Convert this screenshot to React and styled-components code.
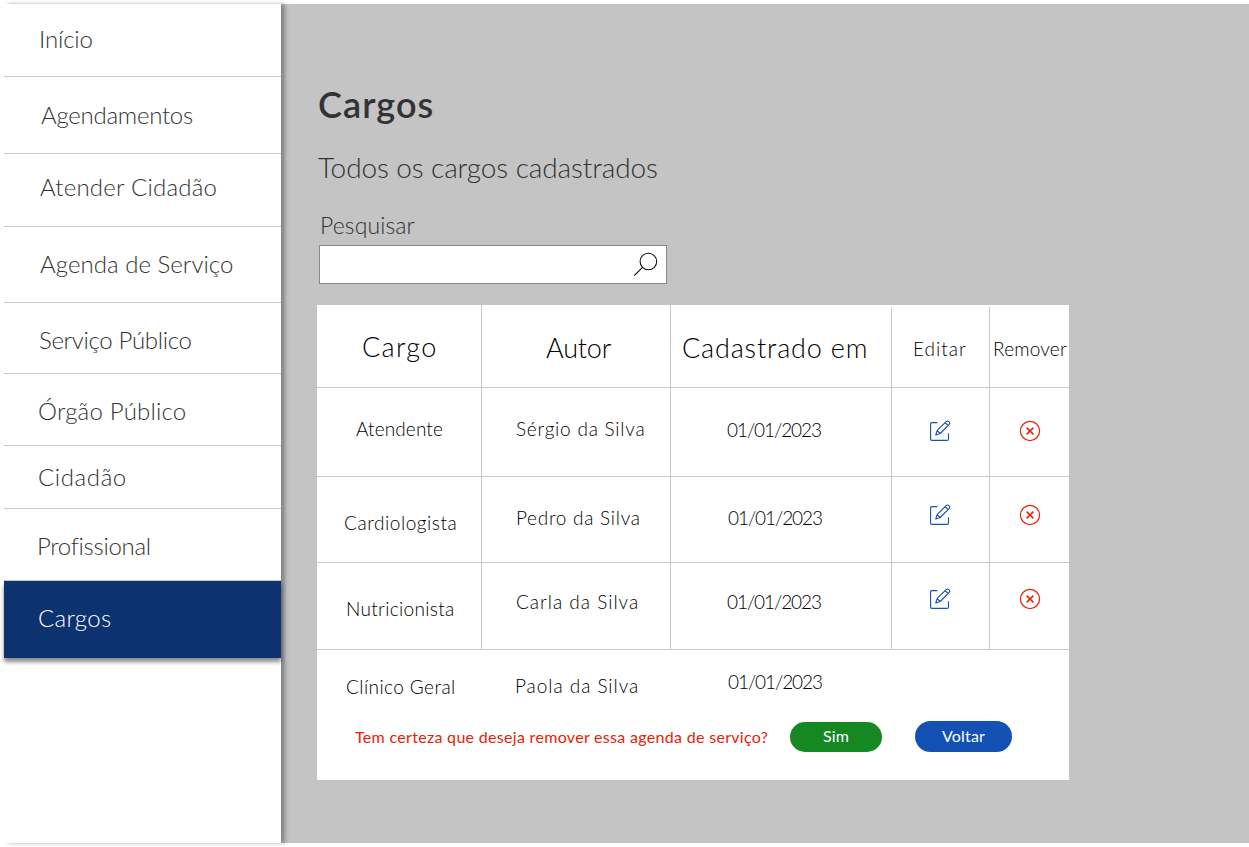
import React from "react";
import styled, { createGlobalStyle } from "styled-components";

const GlobalStyle = createGlobalStyle`
  * { box-sizing: border-box; }
  body { margin: 0; background: #fff; font-family: Lato, sans-serif; font-weight: 300; }
`;

const Page = styled.div`
  display: flex;
  width: 1249px;
  height: 847px;
  padding: 4px 0 4px 4px;
  overflow: hidden;
`;

const Sidebar = styled.nav`
  position: relative;
  z-index: 1;
  display: flex;
  flex-direction: column;
  flex: none;
  width: 277px;
  background: #fff;
  box-shadow: 4px 0 4px rgba(0, 0, 0, 0.32);
`;

const NavItem = styled.a`
  flex: none;
  height: ${(p) => p.$height}px;
  padding: ${(p) => p.$top}px 0 0 ${(p) => p.$left}px;
  border-bottom: 1px solid #c9c9c9;
  color: #333;
  font-size: 24px;
  line-height: 29px;
  letter-spacing: ${(p) => p.$track}px;
  white-space: nowrap;
`;

const ActiveItem = styled(NavItem)`
  border-bottom: 0;
  background: #0c326f;
  color: #fff;
  box-shadow: 0 4px 4px rgba(0, 0, 0, 0.45);
`;

const Main = styled.main`
  flex: 1;
  padding: 82px 0 0 36px;
  background: #c4c4c4;
  color: #333;
`;

const Title = styled.h1`
  height: 64px;
  margin: 0;
  padding-left: 1px;
  font-size: 36px;
  font-weight: 600;
  line-height: 36px;
  letter-spacing: 1.1px;
`;

const Subtitle = styled.h2`
  height: 61px;
  margin: 0;
  padding-left: 1px;
  font-size: 28px;
  font-weight: 300;
  line-height: 34px;
  letter-spacing: -0.11px;
`;

const SearchLabel = styled.label`
  display: block;
  height: 34px;
  padding-left: 3px;
  font-size: 23px;
  line-height: 28px;
  letter-spacing: 0.1px;
`;

const SearchBox = styled.div`
  display: flex;
  justify-content: flex-end;
  width: 348px;
  height: 39px;
  margin: 0 0 21px 2px;
  padding: 6px 8px 0 0;
  border: 1px solid #888;
  background: #fff;
`;

const Table = styled.section`
  width: 752px;
  height: 475px;
  background: #fff;
  color: #000;
`;

const Row = styled.div`
  display: grid;
  grid-template-columns: 165px 189px 221px 98px 79px;
  height: ${(p) => p.$height}px;
  border-bottom: ${(p) => (p.$open ? 0 : "1px solid #c9c9c9")};
`;

const Cell = styled.div`
  padding: ${(p) => p.$top}px 0 0 ${(p) => p.$left}px;
  border-right: ${(p) => (p.$open ? 0 : "1px solid #c9c9c9")};
  font-size: 19px;
  line-height: 23px;
  letter-spacing: ${(p) => p.$track || 0}px;
  white-space: nowrap;

  svg { display: block; }
`;

const HeadCell = styled(Cell)`
  margin-top: ${(p) => p.$inset || 0}px;
  font-size: 27px;
  line-height: 32px;
`;

const SmallHeadCell = styled(Cell)`
  margin-top: 2px;
`;

const Confirm = styled.div`
  display: flex;
  align-items: flex-end;
  height: 35px;
  padding-left: 38px;
`;

const Question = styled.p`
  flex: none;
  width: 435px;
  margin: 0 0 6px;
  color: #e52207;
  font-size: 16px;
  font-weight: 400;
  line-height: 19px;
  letter-spacing: 0.31px;
  white-space: nowrap;
`;

const Button = styled.button`
  width: ${(p) => p.$width}px;
  height: ${(p) => p.$height}px;
  margin: 0 33px 0 0;
  padding: 0 0 ${(p) => p.$lift}px;
  border: 0;
  border-radius: 16px;
  background: ${(p) => p.$color};
  color: #fff;
  font: 400 16px/19px Lato, sans-serif;
  letter-spacing: 0.2px;
`;

const SearchIcon = () => (
  <svg width="24" height="25" viewBox="0 0 24 25" fill="none" stroke="#111" strokeWidth="1.1">
    <circle cx="14.4" cy="9.5" r="8.3" />
    <path d="M8.5 15.4 .2 23.6" />
  </svg>
);

const EditIcon = () => (
  <svg width="22" height="22" viewBox="0 0 22 22" fill="none" stroke="#1351b4" strokeWidth="1.1" strokeLinejoin="round">
    <path d="M7.4 2.6H1.9Q.6 2.6 .6 3.9V19.1Q.6 20.4 1.9 20.4H17.2Q18.5 20.4 18.5 19.1V13.2" />
    <path d="M5.8 15 7.1 10.6 16.1 1.6Q17.5.4 19 1.7 20.3 3.2 19.1 4.6L10.2 13.5ZM7.1 10.6 10.2 13.5M15.2 2.6 18.1 5.5" />
  </svg>
);

const RemoveIcon = () => (
  <svg width="22" height="22" viewBox="0 0 22 22" fill="none" stroke="#e52207" strokeWidth="1.2">
    <circle cx="11" cy="11" r="9.6" />
    <path d="M7.6 7.6 14.4 14.4M14.4 7.6 7.6 14.4" strokeWidth="1.5" />
  </svg>
);

const nav = [
  { label: "Início", height: 73, top: 20, left: 35, track: -0.15 },
  { label: "Agendamentos", height: 77, top: 23, left: 37, track: -0.26 },
  { label: "Atender Cidadão", height: 73, top: 18, left: 36, track: 0.22 },
  { label: "Agenda de Serviço", height: 76, top: 22, left: 36, track: 0.04 },
  { label: "Serviço Público", height: 71, top: 22, left: 35, track: -0.32 },
  { label: "Órgão Público", height: 72, top: 22, left: 34, track: 0.2 },
  { label: "Cidadão", height: 63, top: 16, left: 34, track: 0.6 },
  { label: "Profissional", height: 72, top: 22, left: 33, track: -0.3 },
];

const rows = [
  {
    height: 89,
    cells: [["Atendente", 29, 39, 0.13], ["Sérgio da Silva", 29, 34, 0.77], ["01/01/2023", 30, 56, -1.07]],
    icons: 32,
  },
  {
    height: 86,
    cells: [["Cardiologista", 34, 27, 0.56], ["Pedro da Silva", 29, 34, 0.72], ["01/01/2023", 29, 57, -1.07]],
    icons: 27,
  },
  {
    height: 87,
    cells: [["Nutricionista", 34, 29, 0.33], ["Carla da Silva", 27, 34, 1], ["01/01/2023", 27, 56, -1.07]],
    icons: 25,
  },
  {
    height: 67,
    cells: [["Clínico Geral", 25, 29, 0.42], ["Paola da Silva", 24, 33, 0.95], ["01/01/2023", 20, 57, -1.07]],
  },
];

export default function App() {
  return (
    <Page>
      <GlobalStyle />
      <Sidebar>
        {nav.map((n) => (
          <NavItem key={n.label} $height={n.height} $top={n.top} $left={n.left} $track={n.track}>
            {n.label}
          </NavItem>
        ))}
        <ActiveItem $height={77} $top={22} $left={34} $track={0.33}>Cargos</ActiveItem>
      </Sidebar>
      <Main>
        <Title>Cargos</Title>
        <Subtitle>Todos os cargos cadastrados</Subtitle>
        <SearchLabel>Pesquisar</SearchLabel>
        <SearchBox><SearchIcon /></SearchBox>
        <Table>
          <Row $height={83}>
            <HeadCell $top={26} $left={45} $track={1.3}>Cargo</HeadCell>
            <HeadCell $top={27} $left={64} $track={-0.2}>Autor</HeadCell>
            <HeadCell $inset={2} $top={25} $left={11} $track={0.84}>Cadastrado em</HeadCell>
            <SmallHeadCell $top={30} $left={21} $track={1.01}>Editar</SmallHeadCell>
            <SmallHeadCell $top={30} $left={3} $track={0.21} $open>Remover</SmallHeadCell>
          </Row>
          {rows.map((row) => (
            <Row key={row.cells[0][0]} $height={row.height} $open={!row.icons}>
              {row.cells.map(([text, top, left, track]) => (
                <Cell key={text} $top={top} $left={left} $track={track} $open={!row.icons}>{text}</Cell>
              ))}
              {row.icons && <Cell $top={row.icons} $left={38}><EditIcon /></Cell>}
              {row.icons && <Cell $top={row.icons} $left={29} $open><RemoveIcon /></Cell>}
            </Row>
          ))}
          <Confirm>
            <Question>Tem certeza que deseja remover essa agenda de serviço?</Question>
            <Button $width={92} $height={30} $lift={4} $color="#168821">Sim</Button>
            <Button $width={97} $height={31} $lift={2} $color="#1351b4">Voltar</Button>
          </Confirm>
        </Table>
      </Main>
    </Page>
  );
}
